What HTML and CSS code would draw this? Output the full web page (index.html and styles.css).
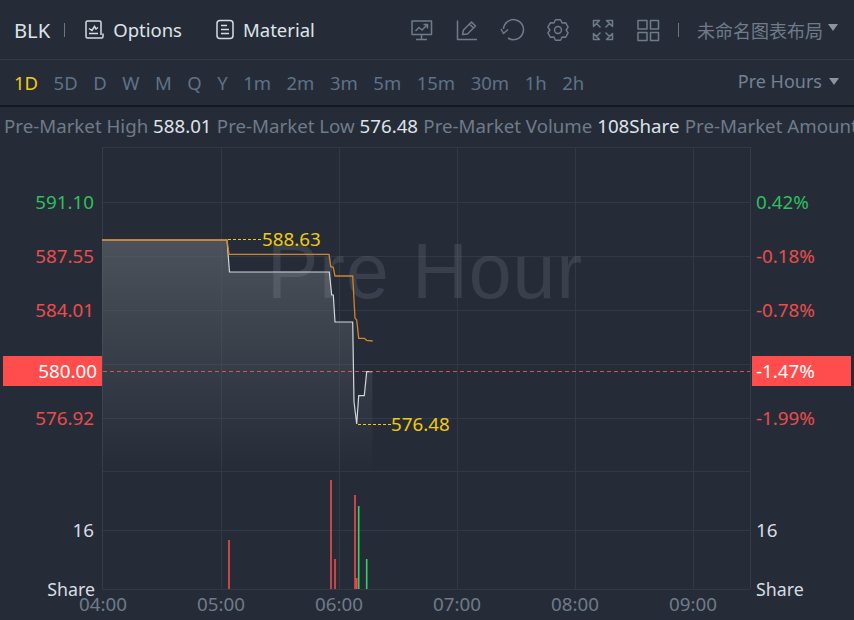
FILE: index.html
```html
<!DOCTYPE html>
<html lang="en">
<head>
<meta charset="utf-8">
<title>BLK Pre Hours</title>
<link rel="stylesheet" href="styles.css">
</head>
<body>
<div class="app">
  <header class="toolbar">
    <span class="symbol">BLK</span>
    <span class="sep"></span>
    <span class="tool tool-options">
      <svg class="ico" width="21" height="21" viewBox="0 0 21 21"><path d="M17 16V3.500A1.500 1.500 0 0 0 15.500 2H3.500A1.500 1.500 0 0 0 2 3.500V17.500A1.500 1.500 0 0 0 3.500 19H17.500A1.500 1.500 0 0 0 19 17.500V14.500M5 9.500 8 11.500 10.500 7.500 12 10 14 8.500M5 14.500H14"/></svg>
      Options
    </span>
    <span class="tool tool-material">
      <svg class="ico" width="18" height="21" viewBox="0 0 18 21"><rect x="1" y="1.500" width="16" height="18" rx="3"/><path d="M5 6.500H11M5 10.500H13M5 14.500H13"/></svg>
      Material
    </span>
    <div class="actions">
      <svg class="act" width="22" height="22" viewBox="0 0 22 22"><path d="M1 2H20.500V15.500H1ZM4.500 12 8 8.500 11 11 16 6M12.500 5.500H16.500V9.500M10.500 15.500V20.500M5 20.500H16"/></svg>
      <svg class="act" width="21" height="22" viewBox="0 0 21 22"><path d="M1.500 1.500V20.500H21M6.500 15.500 7.500 11 15.500 3 19.500 7 11.500 15ZM13.500 5 17.500 9"/></svg>
      <svg class="act" width="24" height="22" viewBox="0 0 24 22"><path d="M3.500 10A10 10 0 1 1 8 19M8 10.500 3.500 14.500 1 10"/></svg>
      <svg class="act" width="22" height="22" viewBox="0 0 23 22"><path d="M8.840.330H14.160L15.750 3.640 19.410 3.360 22.070 7.970 20 11 22.070 14.030 19.410 18.640 15.750 18.360 14.160 21.670H8.840L7.250 18.360 3.590 18.640.930 14.030 3 11 .930 7.970 3.590 3.360 7.250 3.640Z"/><circle cx="11.500" cy="11" r="3.600"/></svg>
      <svg class="act" width="22" height="22" viewBox="0 0 22 22"><path d="M1.500 7.500V1.500H7.500ZM4.500 4.500 8.500 8.500M20.500 7.500V1.500H14.500ZM17.500 4.500 13.500 8.500M20.500 14.500V20.500H14.500ZM17.500 17.500 13.500 13.500M1.500 14.500V20.500H7.500ZM4.500 17.500 8.500 13.500"/></svg>
      <svg class="act" width="22" height="22" viewBox="0 0 22 22"><rect x="1" y="1.500" width="9" height="8.500"/><rect x="13.500" y="1.500" width="8" height="8.500"/><rect x="1" y="13.500" width="9" height="8"/><rect x="13.500" y="13.500" width="8" height="8"/></svg>
      <span class="sep sep-right"></span>
      <span class="layout">未命名图表布局<i class="caret"></i></span>
    </div>
  </header>
  <nav class="periods">
    <span class="p active">1D</span><span class="p">5D</span><span class="p">D</span><span class="p">W</span><span class="p">M</span><span class="p">Q</span><span class="p">Y</span><span class="p">1m</span><span class="p">2m</span><span class="p">3m</span><span class="p">5m</span><span class="p">15m</span><span class="p">30m</span><span class="p">1h</span><span class="p">2h</span>
    <span class="pre">Pre Hours<i class="caret"></i></span>
  </nav>
  <div class="stats">
    <span>Pre-Market High <b>588.01</b></span>
    <span>Pre-Market Low <b>576.48</b></span>
    <span>Pre-Market Volume <b>108Share</b></span>
    <span>Pre-Market Amount</span>
  </div>
  <div class="chart">
    <svg class="plot" width="854" height="473" viewBox="0 147 854 473">
      <defs>
        <linearGradient id="fade" x1="0" y1="0" x2="0" y2="1">
          <stop offset="0" stop-color="#5a6068" stop-opacity=".72"/>
          <stop offset="1" stop-color="#5a6068" stop-opacity="0"/>
        </linearGradient>
      </defs>
      <path class="grid" d="M102.500 147.500H750.500M102.500 202.500H750.500M102.500 256.500H750.500M102.500 310.500H750.500M102.500 364.500H750.500M102.500 418.500H750.500M102.500 471.500H750.500M102.500 530.500H750.500M102.500 589.500H750.500M221.500 147V589M339.500 147V589M457.500 147V589M575.500 147V589M693.500 147V589"/>
      <path class="frame" d="M102.500 147V589M750.500 147V589"/>
      <path fill="url(#fade)" d="M102 240H227L229.500 272H329.300L331.700 295H333.300L335 322H352.700L354 401.700 356.700 424 358.700 395.700H364.300L366.700 371.700H372.300V472H102Z"/>
      <text class="watermark" x="425" y="298" text-anchor="middle">Pre Hour</text>
      <path class="price" d="M102 240H227L229.500 272H329.300L331.700 295H333.300L335 322H352.700L354 401.700 356.700 424 358.700 395.700H364.300L366.700 371.700H372.300"/>
      <path class="avg" d="M102 240H227L229 254.300H329L330.700 266.700 333.300 267.300 335 276H352.700L355 318.300 356.700 320 358.700 338.300H364.300L366.700 340.300 372.700 341"/>
      <path class="dash-live" d="M103 371.500H750"/>
      <path class="dash-gold" d="M358 424.500H392"/>
      <path class="dash-gold" d="M228 239.500H262"/>
      <text class="gold" x="262" y="246">588.63</text>
      <text class="gold" x="391" y="431">576.48</text>
      <path class="bar-red" d="M229 540V589M331 480V589M335 559V589M355 495V589M356.700 578V589"/>
      <path class="bar-green" d="M358.700 506V589M366.700 559V589"/>
      <rect class="tag" x="3" y="356" width="99" height="30"/>
      <rect class="tag" x="752" y="356" width="99" height="30"/>
      <text class="ax up end" x="94" y="209">591.10</text>
      <text class="ax down end" x="94" y="263">587.55</text>
      <text class="ax down end" x="94" y="317">584.01</text>
      <text class="ax light end" x="97" y="378">580.00</text>
      <text class="ax down end" x="94" y="425">576.92</text>
      <text class="ax soft end" x="94" y="537">16</text>
      <text class="ax soft unit end" x="95" y="596">Share</text>
      <text class="ax up" x="756" y="209">0.42%</text>
      <text class="ax down" x="756" y="263">-0.18%</text>
      <text class="ax down" x="756" y="317">-0.78%</text>
      <text class="ax light" x="756" y="378">-1.47%</text>
      <text class="ax down" x="756" y="425">-1.99%</text>
      <text class="ax soft" x="756" y="537">16</text>
      <text class="ax soft unit" x="756" y="596">Share</text>
      <text class="ax time mid" x="103" y="611">04:00</text>
      <text class="ax time mid" x="221" y="611">05:00</text>
      <text class="ax time mid" x="339" y="611">06:00</text>
      <text class="ax time mid" x="457" y="611">07:00</text>
      <text class="ax time mid" x="575" y="611">08:00</text>
      <text class="ax time mid" x="693" y="611">09:00</text>
    </svg>
  </div>
</div>
</body>
</html>
```
FILE: styles.css
```css
* { box-sizing: border-box; }
html, body { margin: 0; padding: 0; height: 100%; background: #252c38; overflow: hidden; }
body { font-family: "Noto Sans", "Noto Sans CJK SC", sans-serif; font-size: 18px; }
.app { width: 854px; height: 620px; display: flex; flex-direction: column; }

.toolbar { height: 60px; flex: none; display: flex; align-items: center; padding: 0 16px 0 14px; border-bottom: 1px solid #323b46; color: #dfe3e8; }
.symbol { font-size: 20.200px; margin-right: 14px; }
.sep { width: 1px; height: 14px; background: #6c7582; flex: none; }
.tool { display: flex; align-items: center; font-size: 18.500px; gap: 8px; }
.tool-options { margin-left: 19px; }
.tool-material { margin-left: 34px; gap: 9px; }
.ico { fill: none; stroke: #d8dce2; stroke-width: 1.500; flex: none; }
.actions { margin-left: auto; display: flex; align-items: center; gap: 23px; color: #6f7b89; }
.act { fill: none; stroke: #6f7b89; stroke-width: 1.500; stroke-linejoin: round; flex: none; overflow: visible; }
.sep-right { margin-left: -4px; margin-right: -5px; }
.layout { display: flex; align-items: center; font-size: 18px; color: #6f7b89; font-family: "Noto Sans CJK SC", sans-serif; }
.caret { display: inline-block; width: 0; height: 0; border-left: 5.500px solid transparent; border-right: 5.500px solid transparent; border-top: 7px solid #8a95a2; margin-left: 5px; position: relative; top: -2px; }

.periods { height: 47px; flex: none; display: flex; align-items: center; padding: 0 15px 0 14px; gap: 15.500px; border-bottom: 2px solid #14181f; color: #5f7287; font-size: 18.500px; }
.p.active { color: #f2cb0c; }
.pre { margin-left: auto; color: #738193; display: flex; align-items: center; font-size: 18px; padding-bottom: 3px; }
.pre .caret { margin-left: 7px; top: 0; }

.stats { height: 40px; flex: none; display: flex; align-items: center; gap: 5.300px; padding: 0 0 3px 4px; white-space: nowrap; overflow: hidden; color: #6f7b89; font-size: 18.700px; }
.stats b { font-weight: 400; color: #dfe3e8; }

.chart { flex: 1; min-height: 0; }
.plot { display: block; font-family: "Noto Sans", sans-serif; }
.grid { stroke: #2f3a46; stroke-width: 1; fill: none; }
.frame { stroke: #323e4b; stroke-width: 1; fill: none; }
.watermark { font-size: 77px; fill: #e8edf2; fill-opacity: .1; font-family: "Liberation Sans", sans-serif; letter-spacing: 1px; }
.price { fill: none; stroke: #d4d6da; stroke-width: 1.200; }
.avg { fill: none; stroke: #d5832b; stroke-width: 1.300; }
.dash-live { stroke: #ff5a5a; stroke-width: 1; stroke-dasharray: 4 3; opacity: .8; }
.dash-gold { stroke: #f2cb0c; stroke-width: 1; stroke-dasharray: 3 2; }
.gold { fill: #f2cb0c; font-size: 18.800px; }
.bar-red { stroke: #ef4b4b; stroke-width: 1.600; fill: none; }
.bar-green { stroke: #2fd35f; stroke-width: 1.600; fill: none; }
.tag { fill: #ff4d4d; }
.ax { font-size: 18.800px; }
.ax.unit { font-size: 17.800px; }
.end { text-anchor: end; }
.mid { text-anchor: middle; }
.up { fill: #2fbf5c; }
.down { fill: #ea4c4c; }
.light { fill: #ffffff; }
.soft { fill: #d8dce2; }
.time { fill: #6f7b89; }
```
